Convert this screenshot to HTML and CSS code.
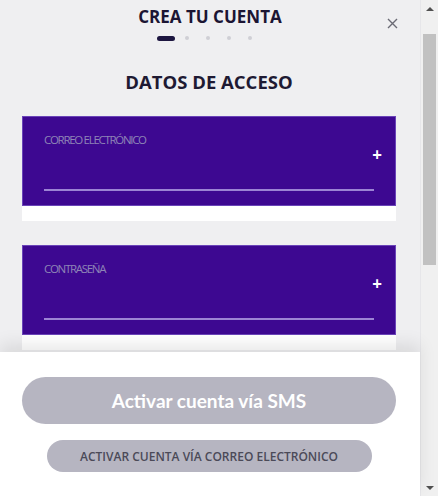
FILE: index.html
```html
<!DOCTYPE html>
<html lang="es">
<head>
  <meta charset="UTF-8" />
  <title>Crea tu cuenta</title>
  <link rel="stylesheet" href="styles.css">
</head>
<body>

<div class="window">
  <div class="page">
    <div class="content">
      <header class="top">
        <h1>CREA TU CUENTA</h1>
        <button class="close-btn" aria-label="Cerrar">
          <svg width="11" height="11" viewBox="0 0 11 11">
            <path d="M1 1 L10 10 M10 1 L1 10" stroke="#6b6b75" stroke-width="1.4" fill="none" />
          </svg>
        </button>
        <div class="steps">
          <span class="step active"></span>
          <span class="step"></span>
          <span class="step"></span>
          <span class="step"></span>
          <span class="step"></span>
        </div>
      </header>

      <h2>DATOS DE ACCESO</h2>

      <div class="field">
        <div class="field-box">
          <label>CORREO ELECTRÓNICO</label>
          <span class="plus">+</span>
          <div class="line"></div>
        </div>
        <div class="field-foot"></div>
      </div>

      <div class="field">
        <div class="field-box">
          <label>CONTRASEÑA</label>
          <span class="plus">+</span>
          <div class="line"></div>
        </div>
        <div class="field-foot"></div>
      </div>
    </div>

    <footer class="actions">
      <button class="btn-sms">Activar cuenta vía SMS</button>
      <button class="btn-mail">ACTIVAR CUENTA VÍA CORREO ELECTRÓNICO</button>
    </footer>
  </div>

  <div class="scrollbar">
    <div class="arrow up"></div>
    <div class="track">
      <div class="thumb"></div>
    </div>
    <div class="arrow down"></div>
  </div>
</div>

</body>
</html>
```

FILE: styles.css
```css
body {
  margin: 0;
  font-family: "Open Sans", Arial, sans-serif;
  background: #efeff1;
}

.window {
  display: flex;
  width: 438px;
  height: 496px;
  overflow: hidden;
}

.page {
  flex: 1;
  display: flex;
  flex-direction: column;
  min-width: 0;
}

.content {
  flex: 1;
  overflow: hidden;
  padding: 0 24px 0 22px;
}

/* header */
.top {
  position: relative;
  padding-top: 5px;
  text-align: center;
}

.top h1 {
  margin: 0 0 0 2px;
  font-size: 17px;
  font-weight: 700;
  color: #1b1533;
  line-height: 24px;
}

.close-btn {
  position: absolute;
  right: -2px;
  top: 18px;
  background: none;
  border: none;
  padding: 0;
  cursor: pointer;
  line-height: 0;
}

.steps {
  display: flex;
  justify-content: center;
  align-items: center;
  gap: 17px;
  margin-top: 6px;
  margin-right: 10px;
  height: 6px;
}

.step {
  width: 4px;
  height: 4px;
  border-radius: 50%;
  background: #cfcfd5;
}

.step.active {
  width: 18px;
  height: 5px;
  border-radius: 3px;
  background: #1d1640;
  margin-right: -7px;
}

h2 {
  margin: 28px 0 21px;
  text-align: center;
  font-size: 18.5px;
  font-weight: 700;
  color: #1e1a33;
  line-height: 26px;
}

/* fields */
.field {
  margin-bottom: 24px;
}

.field-box {
  position: relative;
  height: 88px;
  background: #3d0891;
  border: 1px solid #6a44b8;
  padding: 0 21px;
}

.field-box label {
  display: block;
  padding-top: 16px;
  font-size: 11.5px;
  color: #8e84b6;
  letter-spacing: -1.3px;
  line-height: 14px;
}

.plus {
  position: absolute;
  right: 13px;
  top: 26px;
  color: #fff;
  font-size: 17px;
  font-weight: 700;
}

.line {
  margin-top: 42px;
  height: 2px;
  background: #9c84d4;
}

.field-foot {
  height: 15px;
  background: #fff;
}

/* bottom buttons */
.actions {
  position: relative;
  height: 144px;
  background: #fff;
  box-shadow: 0 -8px 16px rgba(0, 0, 0, 0.09);
  display: flex;
  flex-direction: column;
  align-items: center;
  padding: 0 24px 0 22px;
}

.btn-sms {
  margin-top: 25px;
  width: 100%;
  height: 47px;
  border: none;
  border-radius: 24px;
  background: #b6b5c1;
  color: #fff;
  font-family: Lato, "Open Sans", Arial, sans-serif;
  font-size: 19px;
  font-weight: 700;
  cursor: pointer;
}

.btn-mail {
  margin-top: 16px;
  width: 325px;
  height: 32px;
  border: none;
  border-radius: 16px;
  background: #b6b5c1;
  color: #4b4a58;
  font-family: "Open Sans", Arial, sans-serif;
  font-size: 12px;
  font-weight: 600;
  cursor: pointer;
}

/* fake window scrollbar */
.scrollbar {
  width: 17px;
  display: flex;
  flex-direction: column;
  background: #f0f0f0;
  border-left: 1px solid #e6e6e9;
}

.arrow {
  height: 17px;
  display: flex;
  justify-content: center;
  align-items: center;
}

.arrow::before {
  content: "";
  border-left: 4px solid transparent;
  border-right: 4px solid transparent;
}

.arrow.up::before {
  border-bottom: 4px solid #505050;
}

.arrow.down::before {
  border-top: 4px solid #505050;
}

.track {
  flex: 1;
  padding-top: 17px;
}

.thumb {
  margin: 0 2px;
  height: 231px;
  background: #c1c1c1;
}
```
